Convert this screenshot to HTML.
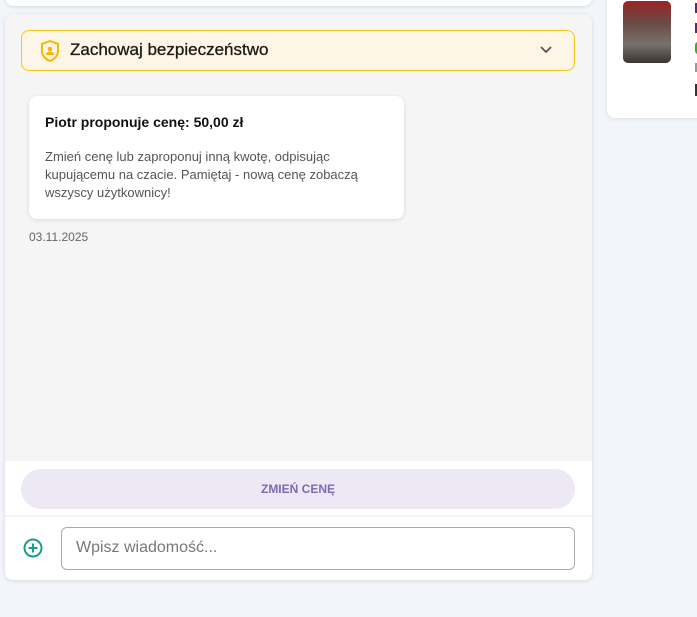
<!DOCTYPE html>
<html><head><meta charset="utf-8"><style>
body{margin:0;width:697px;height:617px;background:#f2f5fa;font-family:"Liberation Sans",sans-serif;position:relative;overflow:hidden}
.abs{position:absolute}
</style></head><body>
<div class="abs" style="left:5px;top:-10px;width:587px;height:16px;background:#fff;border-radius:8px;box-shadow:0 1px 3px rgba(0,0,0,.12)"></div>
<div class="abs" style="left:5px;top:14px;width:587px;height:566px;background:#f5f5f5;border-radius:8px;box-shadow:0 1px 4px rgba(0,0,0,.12);overflow:hidden">
  <div class="abs" style="left:16px;top:16px;width:552px;height:39px;border:1px solid #f5c518;background:#fdf5e6;border-radius:8px">
    <svg class="abs" style="left:18px;top:9px" width="20" height="22" viewBox="0 0 20 22"><path d="M10 1L2 4v7c0 5 4 8.5 8 10 4-1.5 8-5 8-10V4z" fill="none" stroke="#f5b800" stroke-width="2"/><circle cx="10" cy="9" r="2.3" fill="#f5b800"/><path d="M6 15c0-2.5 2-3.5 4-3.5s4 1 4 3.5z" fill="#f5b800"/></svg>
    <div class="abs" style="left:48px;top:9px;font-size:17px;color:#1a1a1a;-webkit-text-stroke:0.3px #1a1a1a">Zachowaj bezpieczeństwo</div>
    <svg class="abs" style="left:517px;top:14px" width="14" height="10" viewBox="0 0 14 10"><path d="M2 2l5 5 5-5" fill="none" stroke="#555" stroke-width="1.8"/></svg>
  </div>
  <div class="abs" style="left:24px;top:82px;width:375px;height:123px;background:#fff;border-radius:8px;box-shadow:0 1px 4px rgba(0,0,0,.12)">
    <div class="abs" style="left:16px;top:18px;font-size:14px;font-weight:bold;color:#111">Piotr proponuje cenę: 50,00 zł</div>
    <div class="abs" style="left:16px;top:52px;width:340px;font-size:13px;line-height:18px;color:#555">Zmień cenę lub zaproponuj inną kwotę, odpisując kupującemu na czacie. Pamiętaj - nową cenę zobaczą wszyscy użytkownicy!</div>
  </div>
  <div class="abs" style="left:24px;top:216px;font-size:12px;color:#666">03.11.2025</div>
  <div class="abs" style="left:0;top:447px;width:587px;height:119px;background:#fff">
    <div class="abs" style="left:16px;top:8px;width:554px;height:40px;background:#ece9f5;border-radius:20px;text-align:center;line-height:40px;font-size:12px;font-weight:bold;color:#7a6bb5">ZMIEŃ CENĘ</div>
    <div class="abs" style="left:0;top:54px;width:587px;height:2px;background:#f3f3f3"></div>
    <svg class="abs" style="left:18px;top:77px" width="20" height="20" viewBox="0 0 20 20"><circle cx="10" cy="10" r="8.5" fill="none" stroke="#16a08a" stroke-width="2"/><path d="M10 5.5v9M5.5 10h9" stroke="#16a08a" stroke-width="2"/></svg>
    <div class="abs" style="left:56px;top:66px;width:512px;height:41px;border:1px solid #aaa;border-radius:6px;background:#fff">
      <div class="abs" style="left:14px;top:11px;font-size:16px;color:#777">Wpisz wiadomość...</div>
    </div>
  </div>
</div>
<div class="abs" style="left:607px;top:-10px;width:110px;height:128px;background:#fff;border-radius:8px;box-shadow:0 1px 4px rgba(0,0,0,.1)">
  <div class="abs" style="left:16px;top:11px;width:48px;height:62px;border-radius:5px;background:linear-gradient(#9a2525 0%,#6a4a45 35%,#77716c 70%,#3a3533 100%)"></div>
  <div class="abs" style="left:88px;top:13px;width:4px;height:10px;background:#5a2a7a"></div>
  <div class="abs" style="left:88px;top:33px;width:4px;height:10px;background:#5a2a7a"></div>
  <div class="abs" style="left:88px;top:52px;width:4px;height:12px;background:#2bb32b;border-radius:3px 0 0 3px"></div>
  <div class="abs" style="left:88px;top:73px;width:4px;height:9px;background:#999"></div>
  <div class="abs" style="left:88px;top:94px;width:4px;height:12px;background:#333"></div>
</div>
</body></html>
